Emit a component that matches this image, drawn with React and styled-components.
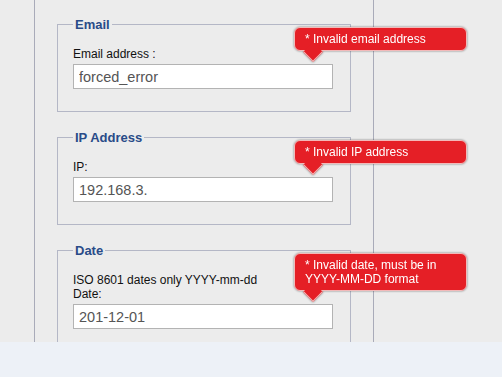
import styled, { createGlobalStyle } from "styled-components";

const GlobalStyle = createGlobalStyle`
  html, body {
    margin: 0;
    padding: 0;
    background: #ececec;
  }
  body {
    font-family: "Liberation Sans", Arial, sans-serif;
  }
`;

const fields = [
  {
    legend: "Email",
    label: "Email address :",
    value: "forced_error",
    error: "* Invalid email address",
  },
  {
    legend: "IP Address",
    label: "IP:",
    value: "192.168.3.",
    error: "* Invalid IP address",
  },
  {
    legend: "Date",
    label: (
      <>
        ISO 8601 dates only YYYY-mm-dd
        <br />
        Date:
      </>
    ),
    value: "201-12-01",
    error: "* Invalid date, must be in YYYY-MM-DD format",
  },
];

export default function App() {
  return (
    <Page>
      <GlobalStyle />
      <Panel>
        {fields.map((f) => (
          <Fieldset key={f.legend}>
            <Legend>{f.legend}</Legend>
            <Label>{f.label}</Label>
            <InputRow>
              <Input defaultValue={f.value} readOnly />
              <ErrorTip>{f.error}</ErrorTip>
            </InputRow>
          </Fieldset>
        ))}
      </Panel>
      <Footer />
    </Page>
  );
}

const Page = styled.div`
  display: flex;
  flex-direction: column;
  min-height: 100vh;
  overflow: hidden;
`;

const Panel = styled.div`
  display: flex;
  flex-direction: column;
  gap: 18px;
  margin-left: 34px;
  width: 340px;
  height: 342px;
  box-sizing: border-box;
  padding: 17px 22px 0 22px;
  border-left: 1px solid #a9abb9;
  border-right: 1px solid #a9abb9;
  flex-shrink: 0;
`;

const Footer = styled.div`
  position: relative;
  z-index: 1;
  flex: 1;
  background: #edf1f7;
`;

const Fieldset = styled.fieldset`
  margin: 0;
  padding: 15px 18px 22px 15px;
  border: 1px solid #b4b7c6;
  min-width: 0;
  flex-shrink: 0;
`;

const Legend = styled.legend`
  padding: 0 2px;
  font-size: 13px;
  line-height: 15px;
  font-weight: bold;
  color: #294b88;
`;

const Label = styled.label`
  display: block;
  font-size: 12px;
  line-height: 14px;
  color: #111;
  margin-bottom: 3px;
`;

const InputRow = styled.div`
  position: relative;
  width: 260px;
`;

const Input = styled.input`
  display: block;
  box-sizing: border-box;
  width: 260px;
  height: 25px;
  margin: 0;
  padding: 0 5px;
  border: 1px solid #b3b3b3;
  background: #fff;
  font-family: "Liberation Sans", Arial, sans-serif;
  font-size: 14.5px;
  color: #555;
  outline: none;
`;

const ErrorTip = styled.div`
  position: absolute;
  left: 221px;
  bottom: calc(100% + 13px);
  z-index: 5;
  width: 173px;
  box-sizing: border-box;
  padding: 4px 8px 4px 10px;
  background: #e51f26;
  border: 1px solid #f3b9b9;
  border-radius: 6px;
  color: #fff;
  font-size: 12px;
  line-height: 14px;
  filter: drop-shadow(0 0 1px rgba(0, 0, 0, 0.45));

  &::after {
    content: "";
    position: absolute;
    left: 11px;
    bottom: -9px;
    width: 14px;
    height: 14px;
    box-sizing: border-box;
    background: #e51f26;
    border-right: 1px solid #f3b9b9;
    border-bottom: 1px solid #f3b9b9;
    transform: rotate(45deg);
  }
`;
